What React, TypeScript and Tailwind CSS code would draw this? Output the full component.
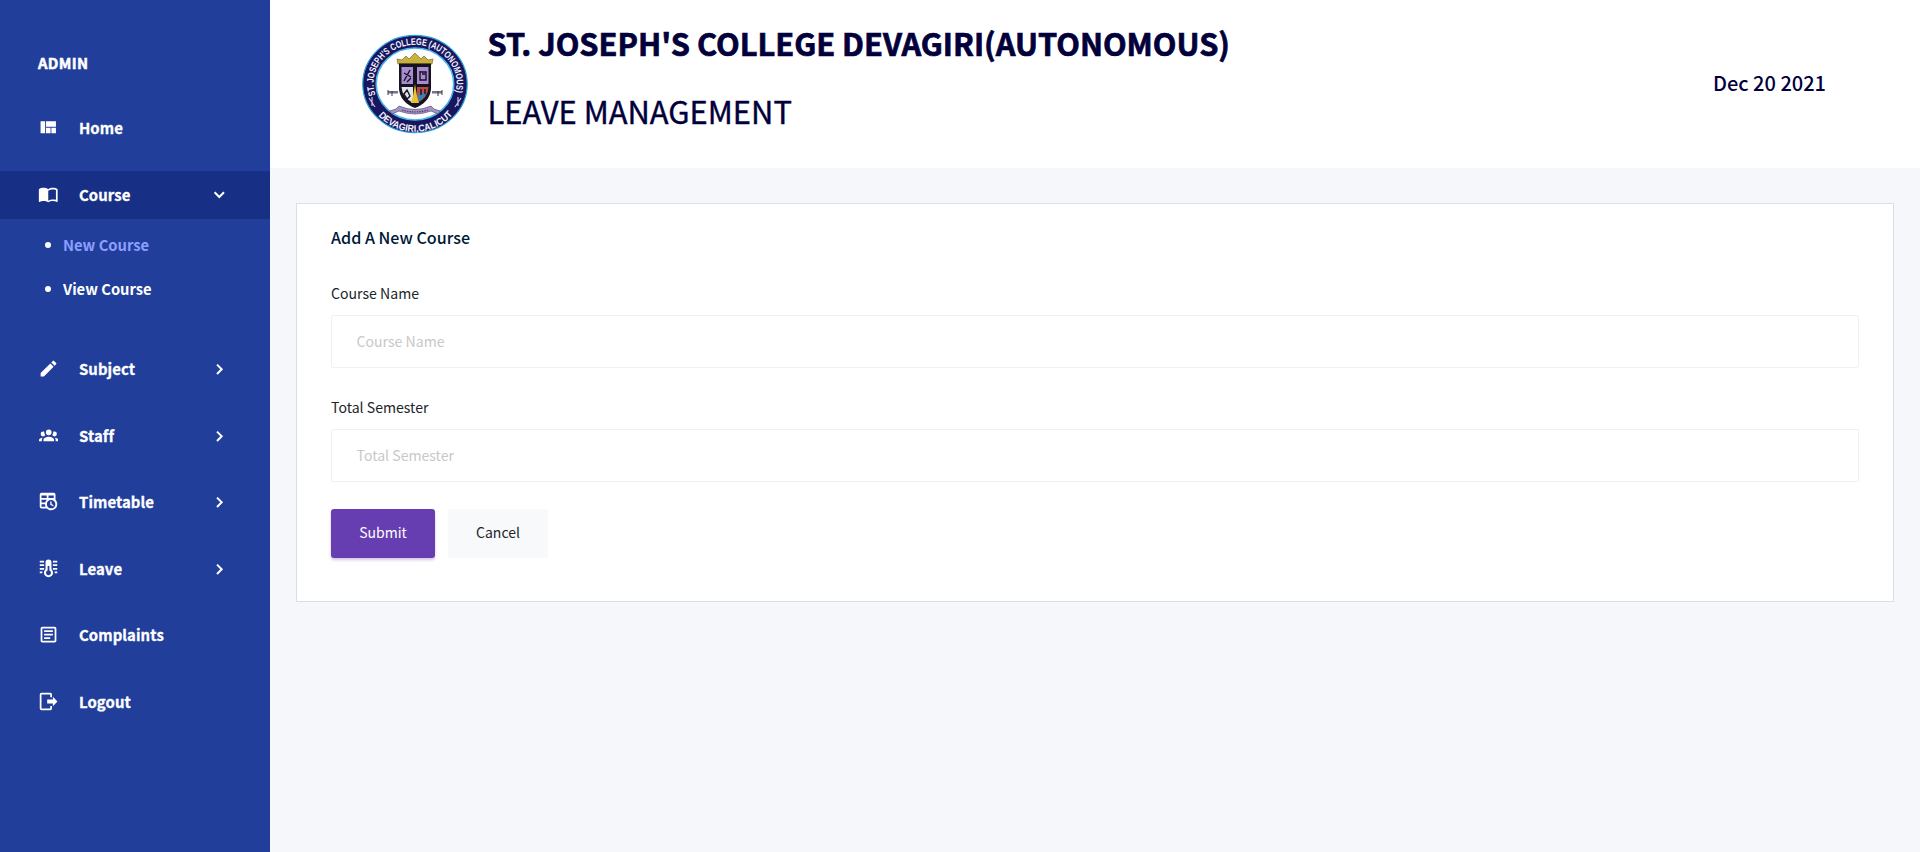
import type { ReactNode } from "react";
import { MdEdit, MdImportContacts, MdOutlineArticle, MdViewQuilt } from "react-icons/md";

const GroupIcon = () => (
  <svg viewBox="0 0 24 24" width="19.5" height="19.5" fill="currentColor">
    <path d="M12,5.5A3.5,3.5 0 0,1 15.5,9A3.5,3.5 0 0,1 12,12.5A3.5,3.5 0 0,1 8.5,9A3.5,3.5 0 0,1 12,5.5M5,8C5.56,8 6.08,8.15 6.53,8.42C6.38,9.85 6.8,11.27 7.66,12.38C7.16,13.34 6.16,14 5,14A3,3 0 0,1 2,11A3,3 0 0,1 5,8M19,8A3,3 0 0,1 22,11A3,3 0 0,1 19,14C17.84,14 16.84,13.34 16.34,12.38C17.2,11.27 17.62,9.85 17.47,8.42C17.92,8.15 18.44,8 19,8M5.5,18.25C5.5,16.18 8.41,14.5 12,14.5C15.59,14.5 18.5,16.18 18.5,18.25V20H5.5V18.25M0,20V18.5C0,17.11 1.89,15.94 4.45,15.6C3.86,16.28 3.5,17.22 3.5,18.25V20H0M24,20H20.5V18.25C20.5,17.22 20.14,16.28 19.55,15.6C22.11,15.94 24,17.11 24,18.5V20Z" />
  </svg>
);

const TimetableIcon = () => (
  <svg viewBox="0 0 24 24" width="21" height="21" fill="currentColor">
    <path d="M14,12H15.5V14.82L17.94,16.23L17.19,17.53L14,15.69V12M4,2H18A2,2 0 0,1 20,4V10.1C21.24,11.36 22,13.09 22,15A7,7 0 0,1 15,22C13.09,22 11.36,21.24 10.1,20H4A2,2 0 0,1 2,18V4A2,2 0 0,1 4,2M4,15V18H8.67C8.24,17.09 8,16.07 8,15H4M4,8H10V5H4V8M18,8V5H12V8H18M4,13H8.29C8.63,11.85 9.26,10.82 10.1,10H4V13M15,10.15A4.85,4.85 0 0,0 10.15,15C10.15,17.68 12.32,19.85 15,19.85A4.85,4.85 0 0,0 19.85,15C19.85,12.32 17.68,10.15 15,10.15Z" />
  </svg>
);

const ThermometerIcon = () => (
  <svg viewBox="0 0 24 24" width="21" height="21" fill="currentColor">
    <path d="M2 3H7V5H2ZM2 7H7V9H2ZM2 11.5H7V13.5H2ZM2 15.5H5V17.5H2ZM17 3H22V5H17ZM17 7H22V9H17ZM17 11.5H22V13.5H17ZM19 15.5H22V17.5H19Z" />
    <path
      fillRule="evenodd"
      d="M12 1.8A3.4 3.4 0 0 1 15.4 5.2V12.8A5.2 5.2 0 1 1 8.6 12.8V5.2A3.4 3.4 0 0 1 12 1.8ZM11 9V14.2A2.8 2.8 0 1 0 13 14.2V9Z"
    />
  </svg>
);

const LogoutIcon = () => (
  <svg viewBox="0 0 24 24" width="21" height="21" fill="currentColor">
    <path d="M17,17.4V14.2H10.5V9.8H17V6.6L22.2,12L17,17.4M14,2A2,2 0 0,1 16,4V7H14V4H4V20H14V17H16V20A2,2 0 0,1 14,22H4A2,2 0 0,1 2,20V4A2,2 0 0,1 4,2H14Z" />
  </svg>
);

const Chevron = ({ down = false }: { down?: boolean }) => (
  <svg viewBox="0 0 12 12" width="12" height="12" fill="none" stroke="currentColor" strokeWidth="2">
    <path d={down ? "M1.6 3.3L6.3 8L11 3.3" : "M4 1.6L8.7 6.3L4 11"} />
  </svg>
);

type ItemProps = { icon: ReactNode; label: string; arrow?: "right" | "down"; active?: boolean };

const NavItem = ({ icon, label, arrow, active }: ItemProps) => (
  <a className={`flex h-12 items-center pl-[37px] pr-[45.5px] ${active ? "bg-[#182f86]" : ""}`}>
    <span className="flex w-[23px] justify-center pb-px">{icon}</span>
    <span className="ml-[19px] flex-1 text-[14.9px] font-bold leading-6 tracking-[0.08px] [-webkit-text-stroke:0.3px_currentColor]">
      {label}
    </span>
    {arrow && <Chevron down={arrow === "down"} />}
  </a>
);

const SubItem = ({ label, active }: { label: string; active?: boolean }) => (
  <li className="flex h-11 items-center pl-[45px]">
    <span className="size-1.5 rounded-full bg-white" />
    <span className={`ml-3 text-[14.75px] font-bold leading-6 ${active ? "text-[#8c9eff]" : ""}`}>{label}</span>
  </li>
);

const Crest = () => (
  <svg viewBox="0 0 108 100" width="108" height="100">
    <defs>
      <path id="ringTop" d="M14.5 61A41.5 38.4 0 1 1 93.5 61" />
      <path id="ringBottom" d="M13 76A48 45.4 0 0 0 95 76" />
    </defs>
    <ellipse cx="54" cy="50" rx="52.2" ry="48.6" fill="#17175f" stroke="#2b9fd8" strokeWidth="1.2" />
    <ellipse cx="54" cy="50" rx="38.8" ry="36" fill="#fff" stroke="#4db4ea" strokeWidth="1.6" />
    <g fill="#f4f2ff" fontFamily="Liberation Sans Narrow, Liberation Sans, sans-serif" fontWeight="700">
      <text fontSize="9.6" textLength="146" lengthAdjust="spacingAndGlyphs">
        <textPath href="#ringTop">ST. JOSEPH'S COLLEGE (AUTONOMOUS)</textPath>
      </text>
      <text fontSize="9.6" textLength="84" lengthAdjust="spacingAndGlyphs">
        <textPath href="#ringBottom" startOffset="7">
          DEVAGIRI,CALICUT
        </textPath>
      </text>
    </g>
    <path d="M8 64L14 73M11 63L11 72M100 64L94 73M97 63L97 72" stroke="#c9c7df" strokeWidth="1.2" />
    <path d="M37 30L36 25L41 26L45 22L48 25L54 19L60 25L63 22L67 26L72 25L71 30Z" fill="#c9b23c" stroke="#8a7a35" strokeWidth=".8" />
    <path d="M38 29.5H70V55Q69 68 54 74Q39 68 38 55Z" fill="#151222" />
    <path d="M40.5 33H52V50H40.5ZM56 33H67.5V50H56Z" fill="#a98bd0" />
    <path d="M40.5 53H52V69Q41 63 40.5 53Z" fill="#dfe5ea" />
    <path d="M56 53H67.5Q67 64 56 69Z" fill="#bd4a42" />
    <path d="M57 60L66 58Q63 65 57 68Z" fill="#3c7fb4" />
    <path d="M43 47L49 36M43 39L50 43M46 48L50 44M59 37V46H65V38H59M61 40H64M43 60L46 56L49 62L46 65ZM60 55V61M64 55V60" fill="none" stroke="#151222" strokeWidth="1.4" />
    <path d="M54 50L56 62L58 69H50L52 62Z" fill="#e8c22e" />
    <path d="M27 57H37V59.5H27ZM71 57H81V59.5H71Z" fill="#77738a" />
    <path d="M27 56V61M81 56V61M31 57V62M77 57V62" stroke="#3a364b" strokeWidth="1" />
    <path d="M35 75L38 72Q54 79 70 72L73 75L79 77L77 80L70 77Q54 83 38 77L31 80L29 77Z" fill="#a494c4" stroke="#5a4a7c" strokeWidth=".7" />
    <path d="M41 76Q54 80 67 76" fill="none" stroke="#4a3b68" strokeWidth="1.2" strokeDasharray="1.5 1" />
  </svg>
);

const Field = ({ label }: { label: string }) => (
  <label className="block">
    <span className="block text-[14.1px] leading-[22px] text-[#212529]">{label}</span>
    <input
      placeholder={label}
      className="mt-[11px] block h-[53px] w-full rounded-[2px] border border-[#f0f1f3] bg-white px-[24.5px] pb-[2px] text-[14.1px] outline-none placeholder:text-[#c9c8c8]"
    />
  </label>
);

export default function App() {
  return (
    <div className="flex h-[852px] w-full bg-[#f5f7fb] font-['Noto_Sans_CJK_SC',sans-serif] text-[#01003a]">
      <aside className="w-[270px] shrink-0 bg-[#213e9b] pt-[51px] text-white">
        <div className="pl-[38px] text-[14.8px] font-bold leading-6 tracking-[0.35px] [-webkit-text-stroke:0.5px_currentColor]">ADMIN</div>
        <nav className="mt-[29px]">
          <NavItem icon={<MdViewQuilt size={20.5} className="mb-px" />} label="Home" />
          <div className="mt-[19px]">
            <NavItem icon={<MdImportContacts size={20.5} />} label="Course" arrow="down" active />
            <ul className="pb-[34px] pt-[4px]">
              <SubItem label="New Course" active />
              <SubItem label="View Course" />
            </ul>
          </div>
          <div className="flex flex-col gap-[18.6px]">
            <NavItem icon={<MdEdit size={21} />} label="Subject" arrow="right" />
            <NavItem icon={<GroupIcon />} label="Staff" arrow="right" />
            <NavItem icon={<TimetableIcon />} label="Timetable" arrow="right" />
            <NavItem icon={<ThermometerIcon />} label="Leave" arrow="right" />
            <NavItem icon={<MdOutlineArticle size={21} />} label="Complaints" />
            <NavItem icon={<LogoutIcon />} label="Logout" />
          </div>
        </nav>
      </aside>
      <div className="flex-1">
        <header className="flex h-[168px] items-center bg-white pl-[91px] pr-[94px]">
          <Crest />
          <div className="ml-[18.5px] flex-1 pb-[15px]">
            <h1 className="text-[30.75px] font-bold leading-[40px] [-webkit-text-stroke:0.7px_currentColor]">
              ST. JOSEPH'S COLLEGE DEVAGIRI(AUTONOMOUS)
            </h1>
            <h2 className="mt-[28px] text-[30.9px] leading-[40px] [-webkit-text-stroke:0.4px_currentColor]">LEAVE MANAGEMENT</h2>
          </div>
          <div className="pb-[2px] text-[20px] font-medium leading-[30px]">Dec 20 2021</div>
        </header>
        <main className="pl-[26px] pr-[26px] pt-[35px]">
          <section className="h-[399px] border border-[#d8dfe9] bg-white px-[34px] pt-[21px]">
            <h3 className="text-[16.1px] font-medium leading-[24px] text-[#001737]">Add A New Course</h3>
            <form className="mt-[33px]">
              <div className="flex flex-col gap-[28px]">
                <Field label="Course Name" />
                <Field label="Total Semester" />
              </div>
              <div className="mt-[27px] flex gap-[13px]">
                <button type="button" className="h-[49px] w-[104px] rounded-[3px] bg-[#673eb1] pb-[2px] text-[14px] text-white shadow-[0_2px_3px_rgba(103,62,177,0.3)]">
                  Submit
                </button>
                <button type="button" className="h-[49px] w-[100px] rounded-[3px] bg-[#f8f9fb] pb-[2px] text-[14px] text-[#212529]">
                  Cancel
                </button>
              </div>
            </form>
          </section>
        </main>
      </div>
    </div>
  );
}
